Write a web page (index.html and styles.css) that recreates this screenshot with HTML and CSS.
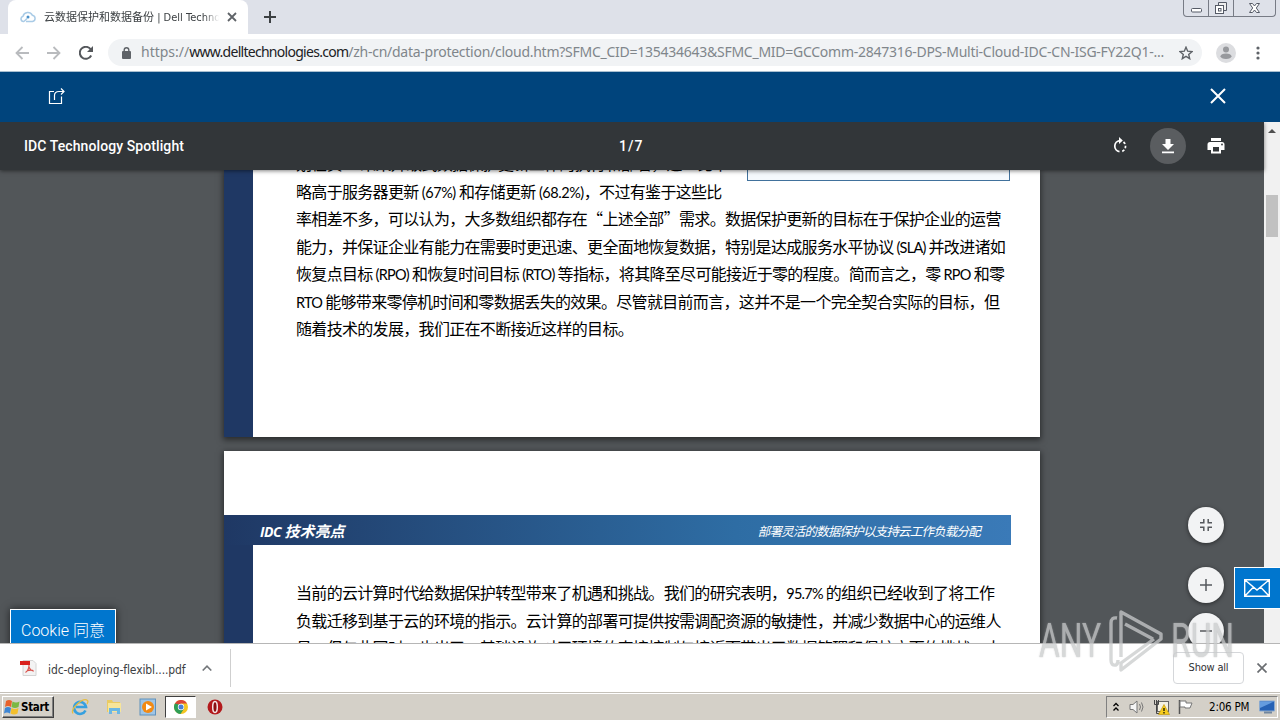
FILE: index.html
```html
<!DOCTYPE html>
<html lang="zh-CN">
<head>
<meta charset="utf-8">
<title>云数据保护和数据备份 | Dell Technologies</title>
<link rel="stylesheet" href="styles.css">
</head>
<body>

<div class="tabstrip">
  <div class="tab">
    <svg class="cloud" width="16" height="12" viewBox="0 0 16 12"><path d="M4 10.5H3.500A2.700 2.700 0 0 1 3 5.200A5 5 0 0 1 12.300 4.200A3.200 3.200 0 0 1 12.500 10.500H10M4 10.500L7 7.500M6 10.500H10" fill="none" stroke="#a9cbe6" stroke-width="1.500"/><circle cx="8" cy="6" r="1.500" fill="#4a90c8"/></svg>
    <span class="tab-title">云数据保护和数据备份 | Dell Techno</span>
    <svg width="10" height="10" viewBox="0 0 10 10"><path d="M1 1L9 9M9 1L1 9" stroke="#5f6368" stroke-width="1.800"/></svg>
  </div>
  <svg class="newtab" width="12" height="12" viewBox="0 0 12 12"><path d="M6 0V12M0 6H12" stroke="#3c4043" stroke-width="2"/></svg>
  <div class="winbtns">
    <span><svg width="13" height="16" viewBox="0 0 13 16"><rect x="1.500" y="8.500" width="10" height="3.500" rx="1" fill="#fff" stroke="#555a66"/></svg></span>
    <span><svg width="14" height="16" viewBox="0 0 14 16"><path d="M4.500 5V2.500H12.500V10.500H10" fill="#eee" stroke="#555a66"/><rect x="1.500" y="5.500" width="8" height="8" fill="#fff" stroke="#555a66"/><rect x="4.500" y="8.500" width="2.500" height="2.500" fill="none" stroke="#555a66"/></svg></span>
    <span class="wide"><svg width="13" height="16" viewBox="0 0 13 16"><path d="M1.500 3.500H4.500L6.500 6L8.500 3.500H11.500L8.300 8L11.500 12.500H8.500L6.500 10L4.500 12.500H1.500L4.700 8Z" fill="#fff" stroke="#555a66"/></svg></span>
  </div>
</div>

<div class="toolbar">
  <svg width="14" height="14" viewBox="0 0 14 14"><path d="M14 7H1.500M7.500 1L1.500 7L7.500 13" fill="none" stroke="#b9bbbe" stroke-width="1.800"/></svg>
  <svg width="14" height="14" viewBox="0 0 14 14"><path d="M0 7H12.500M6.500 1L12.500 7L6.500 13" fill="none" stroke="#b9bbbe" stroke-width="1.800"/></svg>
  <svg width="14" height="14" viewBox="0 0 14 14"><path d="M12.200 9.500A6 6 0 1 1 11.600 3.200" fill="none" stroke="#55585c" stroke-width="2"/><path d="M14 0V6H8Z" fill="#55585c"/></svg>
  <div class="omnibox">
    <svg width="9" height="12" viewBox="0 0 9 12"><rect x="0" y="4" width="9" height="8" rx="1" fill="#5f6368"/><path d="M2.200 5V3A2.300 2.300 0 0 1 6.800 3V5" fill="none" stroke="#5f6368" stroke-width="1.400"/></svg>
    <span class="url"><span class="scheme">https://</span><span class="host">www.delltechnologies.com</span><span class="path">/zh-cn/data-protection/cloud.htm?SFMC_CID=135434643&amp;SFMC_MID=GCComm-2847316-DPS-Multi-Cloud-IDC-CN-ISG-FY22Q1-...</span></span>
    <svg class="star" width="14" height="14" viewBox="0 0 14 14"><path d="M7 1.200L8.700 5.200L13 5.600L9.700 8.400L10.700 12.700L7 10.400L3.300 12.700L4.300 8.400L1 5.600L5.300 5.200Z" fill="none" stroke="#5f6368" stroke-width="1.400"/></svg>
  </div>
  <svg class="avatar" width="20" height="20" viewBox="0 0 20 20"><circle cx="10" cy="10" r="10" fill="#dcdde0"/><circle cx="10" cy="6.500" r="3" fill="#97999d"/><ellipse cx="10" cy="13.300" rx="5.500" ry="2.800" fill="#97999d"/></svg>
  <svg class="dots" width="4" height="14" viewBox="0 0 4 14"><circle cx="2" cy="2" r="1.600" fill="#5f6368"/><circle cx="2" cy="7" r="1.600" fill="#5f6368"/><circle cx="2" cy="12" r="1.600" fill="#5f6368"/></svg>
</div>

<div class="overlay-bar">
  <svg width="18" height="18" viewBox="0 0 18 18"><path d="M6 4.500H1.500V16.500H13.500V9.500M6.500 13V8.500Q6.500 4.500 11 4.500H16M13 1.500L16 4.500L13 7.500" fill="none" stroke="#fff" stroke-width="1.200"/></svg>
  <svg width="16" height="16" viewBox="0 0 16 16"><path d="M1 1L15 15M15 1L1 15" stroke="#fff" stroke-width="2"/></svg>
</div>

<div class="content">
  <div class="viewer">
    <div class="pdf-header">
      <span class="doc-title">IDC Technology Spotlight</span>
      <span class="page-no">1 / 7</span>
      <div class="pdf-tools">
        <svg width="18" height="18" viewBox="0 0 18 18"><path d="M8.500 14.700A5.600 5.600 0 0 1 8.800 3.600" fill="none" stroke="#fff" stroke-width="1.700"/><path d="M8 0V7L11.800 3.500Z" fill="#fff"/><path d="M12.500 5A5.600 5.600 0 0 1 10 14.800" fill="none" stroke="#fff" stroke-width="1.700" stroke-dasharray="2.500 1.800"/></svg>
        <span class="round"><svg width="14" height="16" viewBox="0 0 14 16"><path d="M4.500 1H9.500V6H13L7 12L1 6H4.500ZM1 13.500H13V15.200H1Z" fill="#fff"/></svg></span>
        <svg width="18" height="16" viewBox="0 0 18 16"><path d="M4 0H14V3H4ZM3 4H15A2.500 2.500 0 0 1 17.500 6.500V12H14V15.500H4V12H.5V6.500A2.500 2.500 0 0 1 3 4ZM6 9V13.500H12V9Z" fill="#fff" fill-rule="evenodd"/><circle cx="15" cy="6.500" r=".9" fill="#323639"/></svg>
      </div>
    </div>
    <div class="pages">
      <div class="page first">
        <div class="stripe"></div>
        <div class="callout"></div>
        <div class="text">
          <p>划在负一 未来升级式数据保护更新工作的执行和部署，这一比率</p>
          <p>略高于服务器更新<span class="en num"> (67%) </span>和存储更新<span class="en num"> (68.2%)</span>，不过有鉴于这些比</p>
          <p>率相差不多，可以认为，大多数组织都存在“上述全部”需求。数据保护更新的目标在于保护企业的运营</p>
          <p>能力，并保证企业有能力在需要时更迅速、更全面地恢复数据，特别是达成服务水平协议<span class="en"> (SLA) </span>并改进诸如</p>
          <p>恢复点目标<span class="en"> (RPO) </span>和恢复时间目标<span class="en"> (RTO) </span>等指标，将其降至尽可能接近于零的程度。简而言之，零<span class="en"> RPO </span>和零</p>
          <p><span class="en">RTO </span>能够带来零停机时间和零数据丢失的效果。尽管就目前而言，这并不是一个完全契合实际的目标，但</p>
          <p>随着技术的发展，我们正在不断接近这样的目标。</p>
        </div>
      </div>
      <div class="page second">
        <div class="banner"><span class="brand"><span class="brand-en">IDC</span> 技术亮点</span><span class="topic">部署灵活的数据保护以支持云工作负载分配</span></div>
        <div class="second-body">
          <div class="stripe"></div>
          <div class="text">
            <p>当前的云计算时代给数据保护转型带来了机遇和挑战。我们的研究表明，<span class="en">95.7% </span>的组织已经收到了将工作</p>
            <p>负载迁移到基于云的环境的指示。云计算的部署可提供按需调配资源的敏捷性，并减少数据中心的运维人</p>
            <p>员。但与此同时，也出了一基础设施对于环境的直接控制与接近而带出了数据管理和保护方面的挑战。大</p>
          </div>
        </div>
      </div>
    </div>
  </div>
  <div class="scrollbar">
    <svg width="8" height="4" viewBox="0 0 8 4"><path d="M0 4L4 0L8 4Z" fill="#505050"/></svg>
    <div class="thumb"></div>
  </div>

  <div class="zoom-btn fit"><svg width="12" height="12" viewBox="0 0 12 12"><path d="M0 3.800H3.800V0M8.200 0V3.800H12M12 8.200H8.200V12M3.800 12V8.200H0" fill="none" stroke="#56595d" stroke-width="1.500"/></svg></div>
  <div class="zoom-btn in"><svg width="12" height="12" viewBox="0 0 12 12"><path d="M6 0V12M0 6H12" stroke="#56595d" stroke-width="1.500"/></svg></div>
  <div class="zoom-btn out"><svg width="12" height="12" viewBox="0 0 12 12"><path d="M0 6H12" stroke="#56595d" stroke-width="1.500"/></svg></div>
  <div class="mail"><svg width="26" height="18" viewBox="0 0 26 18"><path d="M.7.700H25.300V17.300H.7ZM1 1L13 11L25 1M1 17L9.500 8M25 17L16.500 8" fill="none" stroke="#fff" stroke-width="1.400"/></svg></div>
  <div class="cookie">Cookie 同意</div>
</div>

<div class="downloads">
  <svg class="pdf-icon" width="17" height="17" viewBox="0 0 17 17"><path d="M3 .5H13L16 3.500V15.500H3Z" fill="#f3f3f3" stroke="#d4d4d4"/><path d="M0 1H10V5H0Z" fill="#d9211d"/><path d="M9 5Q9 10 5.500 12.500M9 7Q10.500 11 14 11M7 10.800Q10 9.800 13 10.300" fill="none" stroke="#d9514b" stroke-width="1.100"/></svg>
  <span class="file">idc-deploying-flexibl....pdf</span>
  <svg class="chev" width="10" height="6" viewBox="0 0 10 6"><path d="M.7 5.500L5 1.200L9.300 5.500" fill="none" stroke="#74777b" stroke-width="1.600"/></svg>
  <div class="sep"></div>
  <span class="showall">Show all</span>
  <svg class="dl-close" width="10" height="10" viewBox="0 0 10 10"><path d="M.5.500L9.500 9.500M9.500.500L.5 9.500" stroke="#6a6d71" stroke-width="1.700"/></svg>
</div>

<div class="taskbar">
  <div class="start">
    <svg width="16" height="15" viewBox="0 0 16 15"><path d="M2 1Q5-1 8 1L7 7Q4 5 1 7Z" fill="#e8622c"/><path d="M8.500 1.500Q12 3.500 15.500 1.500L14.500 7Q11 9 7.500 7Z" fill="#7bb843"/><path d="M1 8Q4 6 7 8L6 13.500Q3 11.500 0 13.500Z" fill="#3e86d4"/><path d="M7.500 8Q11 10 14.500 8L13.500 13.500Q10 15.500 6.500 13.500Z" fill="#f3bf2d"/></svg>
    <b>Start</b>
  </div>
  <div class="quick">
    <svg width="18" height="18" viewBox="0 0 18 18"><path d="M14.500 12.500A6 6 0 1 1 15 9H5" fill="none" stroke="#36a0df" stroke-width="2.600"/><path d="M2 15.500C-1 11 12-1 16.500 2.500Q17.500 3.500 16 6" fill="none" stroke="#e5bd42" stroke-width="1.300"/></svg>
    <svg width="18" height="18" viewBox="0 0 18 18"><path d="M2 2H7L8 4H15V14H2Z" fill="#eacb62"/><path d="M3 5H16V14H3Z" fill="#f7e599"/><path d="M4 16V10H15V16H12V13H7V16Z" fill="#6bb7e3"/></svg>
    <svg width="18" height="18" viewBox="0 0 18 18"><rect x="1" y="1" width="15.500" height="16" fill="#9fc5e6" stroke="#5f91bc"/><circle cx="9" cy="9" r="6" fill="#f28a14"/><path d="M7 5.500L13 9L7 12.500Z" fill="#fff"/></svg>
    <span class="active-app"><svg width="14" height="14" viewBox="0 0 14 14"><circle cx="7" cy="7" r="7" fill="#f4c522"/><path d="M.9 3.500A7 7 0 0 1 13.100 3.500H7L4 8.700Z" fill="#dc4537"/><path d="M.9 3.500A7 7 0 0 0 6.500 14L10 8.700L7 7Z" fill="#2f9e56"/><path d="M1 3.500L4.500 9L7 5Z" fill="#2f9e56"/><circle cx="7" cy="7" r="3.200" fill="#fff"/><circle cx="7" cy="7" r="2.500" fill="#477fd5"/></svg></span>
    <svg class="opera" width="16" height="16" viewBox="0 0 16 16"><circle cx="8" cy="8" r="7.500" fill="#b3191c"/><ellipse cx="8" cy="8" rx="2.300" ry="5.500" fill="#8c1012" stroke="#f4e7e7" stroke-width="1.500"/></svg>
  </div>
  <div class="tray">
    <svg width="6" height="10" viewBox="0 0 6 10"><path d="M.5 4L3 1.500L5.500 4M.5 8.500L3 6L5.500 8.500" fill="none" stroke="#000" stroke-width="1.300"/></svg>
    <svg width="17" height="16" viewBox="0 0 17 16"><path d="M1 5.500H4L8 2V14L4 10.500H1Z" fill="#f5f5f5" stroke="#777"/><path d="M10.500 5Q12.500 8 10.500 11M12.500 3.500Q15.500 8 12.500 12.500" fill="none" stroke="#777"/></svg>
    <svg width="17" height="16" viewBox="0 0 17 16"><rect x="4.500" y="2.500" width="11" height="10" fill="#f4f1e4" stroke="#666"/><path d="M1.500 1V5.500H5.500V1M3.500 1V14.500H7" fill="none" stroke="#444"/><path d="M11 5.500L16.500 15.500H5.500Z" fill="#f7cd1d" stroke="#bc9000" stroke-width=".6"/><path d="M11 9V12M11 13V14.500" stroke="#000" stroke-width="1.200"/></svg>
    <svg width="17" height="16" viewBox="0 0 17 16"><path d="M2.500 1V15" stroke="#555" stroke-width="1.500"/><path d="M3 2H9V4H15L13 9H8V8H3Z" fill="#fff" stroke="#777"/></svg>
    <span class="clock">2:06 PM</span>
    <svg width="16" height="14" viewBox="0 0 16 14"><path d="M.5 1H15.500V11H.5Z" fill="#2662b5" stroke="#8aaad0"/><path d="M1 1.500H15L1 8Z" fill="#649cdf"/><path d="M5 12.500H13" stroke="#71869f" stroke-width="2"/></svg>
  </div>
</div>

<div class="watermark">
  <span class="wm"><span>ANY</span></span>
  <svg width="56" height="62" viewBox="0 0 56 62"><path d="M9 8Q3 7 3 13V50Q3 56 8 55Q10 54 10 50M13 47V2L53 24V29L13 60V53L46 29M17 14L45 29" fill="none" stroke="#c9cbcc" stroke-width="3.400" stroke-linejoin="round"/></svg>
  <span class="wm"><span>RUN</span></span>
</div>

</body>
</html>
```
FILE: styles.css
```css
* {
  box-sizing: border-box;
}

body {
  margin: 0;
  width: 1280px;
  height: 720px;
  overflow: hidden;
  display: flex;
  flex-direction: column;
  position: relative;
  background: #fff;
  font-family: "DejaVu Sans Condensed", "DejaVu Sans", "Noto Sans CJK SC", sans-serif;
  font-size: 11px;
}

svg {
  display: block;
  flex: none;
}

p {
  margin: 0;
}

/* browser chrome */
.tabstrip {
  height: 34px;
  flex: none;
  display: flex;
  background: #dee1e9;
}

.tab {
  width: 240px;
  height: 34px;
  margin-left: 8px;
  padding: 0 11px 0 12px;
  display: flex;
  align-items: center;
  background: #fff;
  border-radius: 8px 8px 0 0;
}

.tab-title {
  width: 175px;
  flex: none;
  margin: -2px 8px 0 8px;
  white-space: nowrap;
  color: #3c4043;
  font-size: 11px;
  -webkit-mask-image: linear-gradient(to right, #000 160px, transparent);
}

.newtab {
  margin: 11px 0 0 16px;
}

.winbtns {
  margin-left: auto;
  margin-right: 4px;
  height: 17px;
  display: flex;
  border: 1px solid #777b85;
  border-top: 0;
  border-radius: 0 0 4px 4px;
}

.winbtns span {
  width: 25px;
  display: flex;
  justify-content: center;
  border-right: 1px solid #777b85;
}

.winbtns .wide {
  width: 41px;
  border-right: 0;
}

.toolbar {
  height: 38px;
  flex: none;
  padding-left: 15px;
  display: flex;
  align-items: center;
  gap: 18px;
  border-bottom: 1px solid #a9bfd0;
}

.omnibox {
  width: 1094px;
  height: 27px;
  flex: none;
  margin-left: -3px;
  padding: 0 9px 0 14px;
  display: flex;
  align-items: center;
  border-radius: 14px;
  background: #f1f3f5;
}

.url {
  margin: -2px 0 0 10px;
  display: flex;
  font-size: 14px;
  white-space: nowrap;
  color: #80868b;
  font-family: "Noto Sans", sans-serif;
}

.host {
  color: #202124;
  letter-spacing: -0.72px;
}

.path {
  letter-spacing: -0.26px;
}

.star {
  margin-left: auto;
}

.avatar {
  margin-left: -4px;
}

.dots {
  margin-left: 2px;
}

.overlay-bar {
  height: 50px;
  flex: none;
  padding: 0 54px 2px 48px;
  display: flex;
  align-items: center;
  justify-content: space-between;
  background: #00447c;
}

/* pdf viewer */
.content {
  height: 521px;
  flex: none;
  display: flex;
  position: relative;
  overflow: hidden;
}

.viewer {
  width: 1264px;
  display: flex;
  flex-direction: column;
  background: #525659;
}

.pdf-header {
  height: 48px;
  flex: none;
  padding: 0 39px 0 24px;
  display: grid;
  grid-template-columns: 595px auto 1fr;
  align-items: center;
  position: relative;
  z-index: 1;
  background: #323639;
  color: #fff;
  font: 500 14px Roboto, sans-serif;
  box-shadow: 0 1px 4px rgba(0, 0, 0, .5);
}

.doc-title {
  letter-spacing: 0.09px;
}

.page-no {
  word-spacing: -2.4px;
}

.pdf-tools {
  display: flex;
  justify-content: flex-end;
  align-items: center;
  gap: 21px;
}

.round {
  width: 36px;
  height: 36px;
  display: flex;
  align-items: center;
  justify-content: center;
  border-radius: 50%;
  background: #5a5d60;
}

.pages {
  height: 473px;
  padding-left: 224px;
  display: flex;
  flex-direction: column;
  gap: 14px;
  overflow: hidden;
}

.page {
  width: 816px;
  flex: none;
  background: #fff;
  box-shadow: 0 2px 6px 1px rgba(0, 0, 0, .5);
}

.first {
  height: 267px;
  display: flex;
  position: relative;
}

.second {
  height: 300px;
  padding-top: 64px;
}

.second-body {
  display: flex;
  height: 206px;
}

.second-body .text {
  padding-top: 34px;
}

.stripe {
  width: 29px;
  background: #1f3864;
}

.text {
  padding-left: 43px;
  font: 16px/27.5px "Noto Sans CJK SC", sans-serif;
  letter-spacing: -0.68px;
  white-space: nowrap;
  color: #000;
}

.first .text {
  margin-top: -20px;
}

.en {
  font: 14.5px Lato, sans-serif;
  letter-spacing: -0.75px;
  white-space: pre;
}

.num {
  letter-spacing: -0.45px;
}

/* lower edge of the sidebar box that floats beside the text */
.callout {
  position: absolute;
  left: 523px;
  top: -10px;
  width: 263px;
  height: 21px;
  border: 1px solid #41719c;
  background: #f5f9fd;
}

.banner {
  width: 787px;
  height: 30px;
  padding: 0 31px 0 36px;
  display: flex;
  align-items: center;
  justify-content: space-between;
  background: linear-gradient(to right, #1f3864, #2e6da4 65%, #3a7ab8);
  color: #fff;
  font-family: "Noto Sans CJK SC", sans-serif;
  font-style: italic;
}

.brand {
  font-size: 15px;
  font-weight: bold;
}

.brand-en {
  font-family: "Open Sans", sans-serif;
  font-size: 14px;
  letter-spacing: -0.5px;
}

.topic {
  font-size: 12.5px;
  letter-spacing: -0.8px;
}

.scrollbar {
  width: 16px;
  padding: 7px 2px 0 2px;
  display: flex;
  flex-direction: column;
  align-items: center;
  gap: 62px;
  background: #f1f1f1;
}

.thumb {
  width: 12px;
  height: 42px;
  background: #c1c1c1;
}

.zoom-btn {
  position: absolute;
  left: 1188px;
  width: 36px;
  height: 36px;
  display: flex;
  align-items: center;
  justify-content: center;
  z-index: 2;
  border-radius: 50%;
  background: #f2f3f4;
  box-shadow: 0 1px 4px rgba(0, 0, 0, .5);
}

.fit {
  top: 385px;
}

.in {
  top: 445px;
}

.out {
  top: 491px;
}

.mail {
  position: absolute;
  left: 1234px;
  top: 445px;
  width: 47px;
  height: 42px;
  padding: 11px 0 0 9px;
  border: 1px solid #fff;
  background: #0076ce;
}

.cookie {
  position: absolute;
  left: 10px;
  top: 487px;
  width: 106px;
  height: 44px;
  padding: 8px 0 0 10px;
  border: 1px solid #fff;
  background: #0076ce;
  color: #fff;
  font: 300 16px/26px Roboto, "Noto Sans CJK SC", sans-serif;
  white-space: nowrap;
  box-shadow: 0 0 8px rgba(0, 0, 0, .6);
}

/* download shelf */
.downloads {
  height: 49px;
  flex: none;
  padding: 0 13px 0 20px;
  display: flex;
  align-items: center;
  background: #fff;
  border-top: 1px solid #b6b6b6;
}

.file {
  width: 138px;
  margin: 3px 0 0 11px;
  color: #3c4043;
  font-size: 12px;
  letter-spacing: -0.1px;
  white-space: nowrap;
}

.chev {
  margin-left: 16px;
}

.sep {
  width: 1px;
  height: 38px;
  margin-left: 18px;
  background: #cfcfcf;
}

.showall {
  width: 71px;
  height: 32px;
  margin-left: auto;
  border: 1px solid #d5d7da;
  border-radius: 4px;
  color: #303134;
  line-height: 29px;
  text-align: center;
  letter-spacing: -0.2px;
}

.dl-close {
  margin-left: 13px;
}

/* windows taskbar */
.taskbar {
  height: 28px;
  flex: none;
  padding: 3px 2px 1px;
  display: flex;
  background: #d4d0c8;
  border-top: 1px solid #c4c0b8;
  box-shadow: inset 0 1px #fff;
}

.start {
  width: 52px;
  height: 22px;
  padding-left: 1px;
  display: flex;
  align-items: center;
  gap: 1px;
  border: 1px solid;
  border-color: #fff #404040 #404040 #fff;
  box-shadow: inset -1px -1px #808080;
}

.start b {
  font-size: 11.5px;
  letter-spacing: -0.3px;
}

.quick {
  height: 22px;
  margin-left: 17px;
  display: flex;
  align-items: center;
  gap: 16px;
}

.active-app {
  width: 31px;
  height: 22px;
  margin: 0 -5px 0 -8px;
  display: flex;
  align-items: center;
  justify-content: center;
  background: #fff;
  border: 1px solid;
  border-color: #404040 #fff #fff #404040;
}

.tray {
  width: 172px;
  height: 22px;
  margin-left: auto;
  padding-left: 6px;
  display: flex;
  align-items: center;
  gap: 7px;
  border: 1px solid;
  border-color: #808080 #fff #fff #808080;
}

.tray svg:first-child {
  margin-right: 3px;
}

.clock {
  margin: 0 3px 0 8px;
  font-size: 11.5px;
  letter-spacing: -0.2px;
  white-space: nowrap;
}

.watermark {
  position: absolute;
  left: 1039px;
  top: 610px;
  width: 194px;
  height: 62px;
  z-index: 5;
  display: flex;
  align-items: center;
  justify-content: space-between;
  opacity: .75;
}

.wm {
  width: 62px;
  color: #c9cbcc;
  font: 49px/60px Roboto, sans-serif;
}

.wm span {
  display: inline-block;
  transform: scaleX(.65);
  transform-origin: left;
  text-shadow: 0 0 2px #aaa;
}
```
